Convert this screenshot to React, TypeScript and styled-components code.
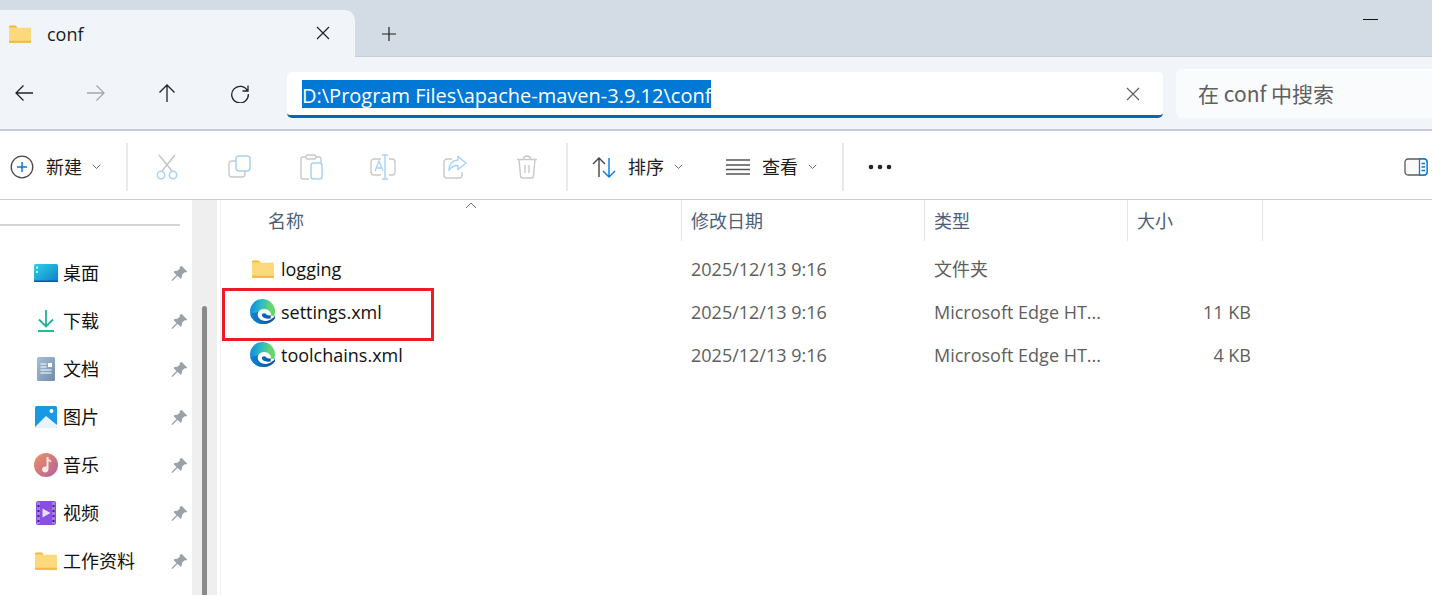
import styled, { createGlobalStyle } from "styled-components";
import { ReactNode } from "react";

const Global = createGlobalStyle`
  html, body { margin: 0; padding: 0; background: #fff; overflow: hidden; }
  body { font-family: "Noto Sans CJK SC", "Noto Sans", sans-serif; color: #1a1a1a; }
`;

const Page = styled.div`
  width: 1432px;
  height: 595px;
  overflow: hidden;
  display: flex;
  flex-direction: column;
`;

const TabStrip = styled.div`
  height: 57px;
  box-sizing: border-box;
  padding-top: 10px;
  background: #d3dbe5;
  border-bottom: 1px solid #c5cdd6;
  display: flex;
  align-items: stretch;
`;

const Tab = styled.div`
  width: 355px;
  height: 47px;
  background: #f1f4f8;
  border-radius: 0 10px 0 0;
  display: flex;
  align-items: center;
  padding: 0 25px 0 9px;
  box-sizing: border-box;
`;

const TabTitle = styled.span`
  flex: 1;
  margin-left: 16px;
  font-family: "Open Sans", sans-serif;
  font-size: 18px;
  color: #1c1c1c;
`;

const TabClose = styled.div`
  display: flex;
  margin-top: -1px;
`;

const NewTab = styled.div`
  margin-left: 26px;
  width: 18px;
  display: flex;
  align-items: center;
  height: 47px;
`;

const Minimize = styled.div`
  margin-left: auto;
  margin-right: 54px;
  margin-top: 9px;
  width: 15px;
  height: 1px;
  background: #111;
`;

const NavBar = styled.div`
  height: 74px;
  box-sizing: border-box;
  background: #f1f4f8;
  border-bottom: 2px solid #c3cad2;
  display: flex;
  align-items: center;
`;

const NavIcon = styled.div<{ $left: number }>`
  margin-left: ${(p) => p.$left}px;
  width: 20px;
  height: 20px;
  display: flex;
`;

const AddressBox = styled.div`
  margin-left: 37px;
  margin-top: 4px;
  width: 876px;
  height: 46px;
  box-sizing: border-box;
  background: #fff;
  border-bottom: 3px solid #0067c0;
  border-radius: 5px;
  display: flex;
  align-items: center;
  padding: 0 23px 0 15px;
`;

const Selected = styled.span`
  display: inline-block;
  background: #0078d4;
  color: #fff;
  font-family: "Open Sans", sans-serif;
  font-size: 20px;
  line-height: 32px;
  height: 28px;
  white-space: nowrap;
`;

const ClearIcon = styled.div`
  margin-left: auto;
  display: flex;
`;

const SearchBox = styled.div`
  margin-left: 13px;
  margin-top: 1px;
  flex: 1;
  height: 49px;
  box-sizing: border-box;
  background: #fafbfd;
  border-radius: 6px 0 0 6px;
  display: flex;
  align-items: center;
  padding: 0 0 2px 22px;
  font-size: 21px;
  color: #5f5f5f;
  white-space: pre;
`;

const Toolbar = styled.div`
  height: 69px;
  box-sizing: border-box;
  border-bottom: 1px solid #c9ced3;
  background: #fff;
  display: flex;
  align-items: center;
  padding: 4px 0 0 10px;
  font-size: 18px;
`;

const Divider = styled.div<{ $left: number }>`
  width: 2px;
  height: 48px;
  background: #e9e9e9;
  margin-left: ${(p) => p.$left}px;
`;

const ToolLabel = styled.span<{ $gap: number }>`
  margin-left: ${(p) => p.$gap}px;
  padding-bottom: 2px;
  color: #1c1c1c;
  font-size: 18px;
  line-height: 24px;
`;

const Slot = styled.div<{ $width: number; $gap?: number }>`
  width: ${(p) => p.$width}px;
  margin-left: ${(p) => p.$gap ?? 0}px;
  display: flex;
  justify-content: center;
  align-items: center;
  flex: none;
`;

const Chevron = styled.div<{ $gap: number }>`
  margin-left: ${(p) => p.$gap}px;
  display: flex;
`;

const PaneToggle = styled.div`
  margin-left: auto;
  margin-right: 4px;
  display: flex;
`;

const Body = styled.div`
  flex: 1;
  display: flex;
  min-height: 0;
`;

const Side = styled.div`
  width: 192px;
  flex: none;
  box-sizing: border-box;
  padding-top: 24px;
`;

const SideRule = styled.div`
  width: 180px;
  height: 2px;
  background: #d2d4d6;
  margin-bottom: 23px;
`;

const SideRow = styled.div`
  height: 48px;
  display: flex;
  align-items: center;
  box-sizing: border-box;
  padding-left: 33px;
`;

const SideIcon = styled.div`
  width: 26px;
  height: 26px;
  display: flex;
  align-items: center;
  justify-content: center;
  flex: none;
`;

const SideText = styled.span`
  margin-left: 4px;
  padding-bottom: 2px;
  font-size: 18px;
  color: #111;
  flex: 1;
  line-height: 24px;
`;

const Pin = styled.div`
  margin-right: 4px;
  display: flex;
`;

const Track = styled.div`
  width: 25px;
  flex: none;
  background: #efefef;
  box-sizing: border-box;
  padding: 106px 0 0 10px;
`;

const Thumb = styled.div`
  width: 5px;
  height: 300px;
  background: #8b8b8b;
  border-radius: 3px 3px 0 0;
`;

const Main = styled.div`
  flex: 1;
  min-width: 0;
  position: relative;

  &::before {
    content: "";
    position: absolute;
    left: 3px;
    top: 0;
    bottom: 0;
    width: 1px;
    background: #f3f3f3;
  }
`;

const HeaderRow = styled.div`
  height: 42px;
  display: grid;
  grid-template-columns: 465px 243px 203px 135px;
  font-size: 18px;
  color: #4c607a;
`;

const HeaderCell = styled.div<{ $pad: number }>`
  border-right: 1px solid #e5e5e5;
  padding-left: ${(p) => p.$pad}px;
  box-sizing: border-box;
  height: 41px;
  line-height: 40px;
`;

const SortCaret = styled.div`
  position: absolute;
  left: 248px;
  top: 2px;
  display: flex;
`;

const FileList = styled.div`
  padding-top: 5px;
`;

const FileRow = styled.div`
  height: 43px;
  display: grid;
  grid-template-columns: 465px 243px 203px 123px;
  align-items: center;
  font-family: "Open Sans", sans-serif;
  font-size: 18px;
  color: #5e5e5e;
`;

const NameCell = styled.div`
  display: flex;
  align-items: center;
  padding-left: 33px;
  color: #111;
`;

const NameIcon = styled.div`
  width: 25px;
  height: 25px;
  display: flex;
  align-items: center;
  justify-content: center;
  flex: none;
`;

const NameText = styled.span`
  margin-left: 6px;
`;

const DateCell = styled.div`
  padding-left: 9px;
`;

const TypeCell = styled.div`
  padding-left: 9px;
  white-space: nowrap;
`;

const CjkCell = styled(TypeCell)`
  padding-bottom: 2px;
  font-family: "Noto Sans CJK SC", sans-serif;
`;

const SizeCell = styled.div`
  text-align: right;
`;

const Highlight = styled.div`
  position: absolute;
  left: 5px;
  top: 88px;
  width: 212px;
  height: 53px;
  box-sizing: border-box;
  border: 3px solid #ed1c24;
`;

const Svg = ({ w, h, children }: { w: number; h: number; children: ReactNode }) => (
  <svg width={w} height={h} viewBox={`0 0 ${w} ${h}`} fill="none">
    {children}
  </svg>
);

const FolderIcon = () => (
  <svg width="22" height="18" viewBox="0 0 22 18">
    <path d="M0 2.200C0 1 .6.4 1.600.4h5l2.400 2.400H0z" fill="#f7b731" />
    <rect x="0" y="2.800" width="22" height="15" rx="0.800" fill="#fcd97b" />
    <rect x="0" y="15.800" width="22" height="2" fill="#f1b93f" />
  </svg>
);

const EdgeIcon = () => (
  <svg width="25" height="25" viewBox="0 0 25 25">
    <defs>
      <linearGradient id="edgeTop" x1="0" y1="0.3" x2="1" y2="0.5">
        <stop offset="0" stopColor="#1289dc" />
        <stop offset="0.42" stopColor="#2dbac6" />
        <stop offset="0.78" stopColor="#66d56e" />
      </linearGradient>
      <linearGradient id="edgeLow" x1="0" y1="0" x2="1" y2="0">
        <stop offset="0" stopColor="#1184d8" />
        <stop offset="1" stopColor="#0c4f96" />
      </linearGradient>
    </defs>
    <circle cx="12.500" cy="12.500" r="12.500" fill="url(#edgeTop)" />
    <path d="M6 14c2-2 7-2.500 10-1 1.800 1 2.500 2.300 1.800 3.500H25v3c-2.500 3.500-6.500 5.500-11 5.500C7 25 2 21 .3 15.500c1.500-1.500 3.700-2 5.700-1.500z" fill="url(#edgeLow)" />
    <path d="M21 16.500c.4-3.600-2.900-6.500-7-6.500-4 0-6.800 3-6.200 6.500.6 3.400 4.300 5.800 8.500 5.400 2.600-.3 5-1.400 6.500-3.200-2 .8-4.500 1.200-6.500.9-2.700-.4-4.500-1.800-4.500-3.600 0-1 .9-1.700 2.200-1.700 1.500 0 2.500.7 2.700 1.700z" fill="#fff" />
    <path d="M21 16.500H24.800c-.3 1-.8 1.800-1.800 2.400-1 .2-1.700.2-2.500 0z" fill="#fff" />
  </svg>
);

const PinIcon = () => (
  <svg width="17" height="17" viewBox="0 0 17 17">
    <path d="M10.500.8l5.700 5.600-1.300 1.100-1.300-.2-2.700 2.700c.3 1.500 0 2.800-1 3.700L6.300 10.900 1.700 15.700.6 15.900l.2-1.200 4.700-4.600-3-3.200c1-1 2.300-1.300 3.800-1l2.700-2.700-.2-1.300z" fill="#98a2a8" />
  </svg>
);

const Chev = () => (
  <Svg w={9} h={6}>
    <path d="M.8.8l3.700 3.700L8.200.8" stroke="#666" strokeWidth="1" />
  </Svg>
);

const files = [
  { name: "logging", type: "文件夹", size: "", kind: "folder" },
  { name: "settings.xml", type: "Microsoft Edge HT...", size: "11 KB", kind: "edge" },
  { name: "toolchains.xml", type: "Microsoft Edge HT...", size: "4 KB", kind: "edge" },
];

const places = [
  {
    label: "桌面",
    icon: (
      <svg width="24" height="18" viewBox="0 0 24 18">
        <defs>
          <linearGradient id="desk" x1="0" y1="0" x2="1" y2="1">
            <stop offset="0" stopColor="#2fd4e2" />
            <stop offset="1" stopColor="#0c7dcb" />
          </linearGradient>
        </defs>
        <rect width="24" height="18" rx="1.500" fill="url(#desk)" />
        <rect y="16.500" width="24" height="1.500" fill="#0a5aa0" />
        <rect x="2" y="2.500" width="2" height="2" fill="#d8f6fb" />
        <rect x="2" y="7" width="2" height="2" fill="#d8f6fb" />
      </svg>
    ),
  },
  {
    label: "下载",
    icon: (
      <svg width="18" height="24" viewBox="0 0 18 24">
        <path d="M9 1v16M2 10.500l7 7 7-7" stroke="#1fb29a" strokeWidth="1.800" fill="none" />
        <rect x="1" y="21" width="16" height="2" fill="#22bd96" />
      </svg>
    ),
  },
  {
    label: "文档",
    icon: (
      <svg width="18" height="24" viewBox="0 0 18 24">
        <defs>
          <linearGradient id="doc" x1="0" y1="0" x2="1" y2="1">
            <stop offset="0" stopColor="#a9bfd8" />
            <stop offset="1" stopColor="#6f8caa" />
          </linearGradient>
        </defs>
        <rect width="18" height="24" rx="1.500" fill="url(#doc)" />
        <path d="M3.500 7h6M3.500 10h6M3.500 13h11M3.500 16h11" stroke="#fff" strokeWidth="1" />
        <rect x="11" y="6" width="4" height="4" fill="#fff" />
      </svg>
    ),
  },
  {
    label: "图片",
    icon: (
      <svg width="22" height="22" viewBox="0 0 22 22">
        <rect width="22" height="22" rx="1.500" fill="#1a98e2" />
        <path d="M0 21l11-11 11 9v1.500c0 .8-.5 1.500-1.500 1.500h-19C.5 22 0 21.500 0 21z" fill="#e8f3fb" />
        <circle cx="16.500" cy="5" r="2" fill="#fff" />
      </svg>
    ),
  },
  {
    label: "音乐",
    icon: (
      <svg width="24" height="24" viewBox="0 0 24 24">
        <defs>
          <linearGradient id="music" x1="0" y1="0" x2="1" y2="1">
            <stop offset="0" stopColor="#ee9360" />
            <stop offset="1" stopColor="#b0609f" />
          </linearGradient>
        </defs>
        <circle cx="12" cy="12" r="12" fill="url(#music)" />
        <path d="M12.500 4h2v2.200c1.300.3 2.500 1 3 2.300l-1 .8c-.5-.6-1.200-1-2-1.100v7.800c0 2-1.500 3.400-3.300 3.400S8 18 8 16.400s1.400-3 3-3c.5 0 1 .1 1.500.3z" fill="#fde9e4" />
      </svg>
    ),
  },
  {
    label: "视频",
    icon: (
      <svg width="20" height="24" viewBox="0 0 20 24">
        <rect width="20" height="24" rx="2" fill="#8a4ee0" />
        <path d="M1 1h3v22H1zM16 1h3v22h-3z" fill="#a778ee" />
        <path d="M1.500 4h2v2h-2zM1.500 9h2v2h-2zM1.500 14h2v2h-2zM1.500 19h2v2h-2zM16.500 4h2v2h-2zM16.500 9h2v2h-2zM16.500 14h2v2h-2zM16.500 19h2v2h-2z" fill="#3c2573" />
        <path d="M6.500 7.500l8 4.500-8 4.500z" fill="#e9ddfb" />
      </svg>
    ),
  },
  { label: "工作资料", icon: <FolderIcon /> },
];

export default function App() {
  return (
    <Page>
      <Global />
      <TabStrip>
        <Tab>
          <FolderIcon />
          <TabTitle>conf</TabTitle>
          <TabClose>
            <Svg w={14} h={14}>
              <path d="M1 1l12 12M13 1L1 13" stroke="#222" strokeWidth="1.200" />
            </Svg>
          </TabClose>
        </Tab>
        <NewTab>
          <Svg w={16} h={16}>
            <path d="M8 1v14M1 8h14" stroke="#222" strokeWidth="1.200" />
          </Svg>
        </NewTab>
        <Minimize />
      </TabStrip>
      <NavBar>
        <NavIcon $left={14}>
          <Svg w={20} h={20}>
            <path d="M19 10H2M9.500 2.500L2 10l7.500 7.500" stroke="#222" strokeWidth="1.300" />
          </Svg>
        </NavIcon>
        <NavIcon $left={52}>
          <Svg w={20} h={20}>
            <path d="M1 10h17M10.500 2.500L18 10l-7.500 7.500" stroke="#a5a8ab" strokeWidth="1.300" />
          </Svg>
        </NavIcon>
        <NavIcon $left={51}>
          <Svg w={20} h={20}>
            <path d="M10 19V2M2.500 9.500L10 2l7.500 7.500" stroke="#222" strokeWidth="1.300" />
          </Svg>
        </NavIcon>
        <NavIcon $left={53}>
          <Svg w={20} h={20}>
            <path d="M17.500 8A8.300 8.300 0 1 0 18.300 11M18 2.500V8h-5.500" stroke="#222" strokeWidth="1.300" />
          </Svg>
        </NavIcon>
        <AddressBox>
          <Selected>D:\Program Files\apache-maven-3.9.12\conf</Selected>
          <ClearIcon>
            <Svg w={14} h={14}>
              <path d="M1 1l12 12M13 1L1 13" stroke="#5c5c5c" strokeWidth="1.100" />
            </Svg>
          </ClearIcon>
        </AddressBox>
        <SearchBox>在 conf 中搜索</SearchBox>
      </NavBar>
      <Toolbar>
        <Svg w={24} h={24}>
          <circle cx="12" cy="12" r="10.800" stroke="#4a4a4a" strokeWidth="1.300" />
          <path d="M12 7v10M7 12h10" stroke="#0a78d6" strokeWidth="1.500" />
        </Svg>
        <ToolLabel $gap={12}>新建</ToolLabel>
        <Chevron $gap={10}>
          <Chev />
        </Chevron>
        <Divider $left={25} />
        <Slot $width={78}>
          <Svg w={24} h={26}>
            <path d="M4 1l13 16M20 1L7 17" stroke="#c4c4c4" strokeWidth="1.400" />
            <circle cx="6" cy="21" r="3.700" stroke="#a8d2f5" strokeWidth="1.500" />
            <circle cx="18" cy="21" r="3.700" stroke="#a8d2f5" strokeWidth="1.500" />
          </Svg>
        </Slot>
        <Slot $width={67}>
          <Svg w={24} h={24}>
            <rect x="1" y="6" width="16" height="16" rx="3" stroke="#c9c9c9" strokeWidth="1.400" />
            <rect x="8" y="1" width="14" height="15" rx="3" fill="#fff" stroke="#a8d2f5" strokeWidth="1.500" />
          </Svg>
        </Slot>
        <Slot $width={77}>
          <Svg w={24} h={26}>
            <path d="M6 3H3a2 2 0 0 0-2 2v18a2 2 0 0 0 2 2h6M16 3h3a2 2 0 0 1 2 2v4" stroke="#c9c9c9" strokeWidth="1.400" />
            <rect x="6" y="1" width="10" height="4" rx="1.500" stroke="#c9c9c9" strokeWidth="1.400" />
            <rect x="11" y="9" width="11" height="16" rx="2.500" stroke="#a8d2f5" strokeWidth="1.500" />
          </Svg>
        </Slot>
        <Slot $width={66}>
          <Svg w={26} h={26}>
            <path d="M11 5H4a3 3 0 0 0-3 3v10a3 3 0 0 0 3 3h7M19 5h3a3 3 0 0 1 3 3v10a3 3 0 0 1-3 3h-3" stroke="#c9c9c9" strokeWidth="1.400" />
            <path d="M15 1v24M12 1h6M12 25h6" stroke="#a8d2f5" strokeWidth="1.400" />
            <path d="M5 17l4-10 4 10M6.500 14h5" stroke="#a8d2f5" strokeWidth="1.300" />
          </Svg>
        </Slot>
        <Slot $width={78}>
          <Svg w={24} h={24}>
            <path d="M9 4H4a3 3 0 0 0-3 3v13a3 3 0 0 0 3 3h12a3 3 0 0 0 3-3v-3" stroke="#c9c9c9" strokeWidth="1.400" />
            <path d="M15 1.500l8 6.500-8 6.500v-4c-4 0-7 1.500-9 5 0-6 3-10 9-10.500z" stroke="#a8d2f5" strokeWidth="1.400" strokeLinejoin="round" />
          </Svg>
        </Slot>
        <Slot $width={66}>
          <Svg w={22} h={24}>
            <path d="M1 4.500h20M3 4.500l1.500 16a2.500 2.500 0 0 0 2.500 2.500h8a2.500 2.500 0 0 0 2.500-2.500L19 4.500M7.500 4.500C7.500 2 9 1 11 1s3.500 1 3.500 3.500M9 10v8M13 10v8" stroke="#c9c9c9" strokeWidth="1.400" />
          </Svg>
        </Slot>
        <Divider $left={6} />
        <Slot $width={24} $gap={24}>
          <Svg w={24} h={22}>
            <path d="M7 21V2M1 8l6-6 6 6" stroke="#444" strokeWidth="1.400" />
            <path d="M17 2v19M11 15l6 6 6-6" stroke="#0a78d6" strokeWidth="1.400" />
          </Svg>
        </Slot>
        <ToolLabel $gap={12}>排序</ToolLabel>
        <Chevron $gap={10}>
          <Chev />
        </Chevron>
        <Slot $width={24} $gap={43}>
          <Svg w={24} h={16}>
            <path d="M0 1h24M0 6h24M0 10.500h24M0 15h24" stroke="#555" strokeWidth="1.300" />
          </Svg>
        </Slot>
        <ToolLabel $gap={12}>查看</ToolLabel>
        <Chevron $gap={10}>
          <Chev />
        </Chevron>
        <Divider $left={25} />
        <Slot $width={24} $gap={24}>
          <Svg w={24} h={6}>
            <circle cx="3" cy="3" r="2.300" fill="#222" />
            <circle cx="12" cy="3" r="2.300" fill="#222" />
            <circle cx="21" cy="3" r="2.300" fill="#222" />
          </Svg>
        </Slot>
        <PaneToggle>
          <Svg w={24} h={18}>
            <rect x="1" y="1" width="22" height="16" rx="3" fill="#fafafa" stroke="#5c5c5c" strokeWidth="1.300" />
            <path d="M15.500 1H20a3 3 0 0 1 3 3v10a3 3 0 0 1-3 3h-4.500z" fill="#fff" stroke="#0a78d6" strokeWidth="1.300" />
            <path d="M17.500 5.500h3.500M17.500 9h3.500M17.500 12.500h3.500" stroke="#0a78d6" strokeWidth="1.300" />
          </Svg>
        </PaneToggle>
      </Toolbar>
      <Body>
        <Side>
          <SideRule />
          {places.map((p) => (
            <SideRow key={p.label}>
              <SideIcon>{p.icon}</SideIcon>
              <SideText>{p.label}</SideText>
              <Pin>
                <PinIcon />
              </Pin>
            </SideRow>
          ))}
        </Side>
        <Track>
          <Thumb />
        </Track>
        <Main>
          <SortCaret>
            <Svg w={12} h={7}>
              <path d="M1 6l5-5 5 5" stroke="#6e6e6e" strokeWidth="1" />
            </Svg>
          </SortCaret>
          <HeaderRow>
            <HeaderCell $pad={51}>名称</HeaderCell>
            <HeaderCell $pad={9}>修改日期</HeaderCell>
            <HeaderCell $pad={9}>类型</HeaderCell>
            <HeaderCell $pad={9}>大小</HeaderCell>
          </HeaderRow>
          <FileList>
            {files.map((f) => (
              <FileRow key={f.name}>
                <NameCell>
                  <NameIcon>{f.kind === "folder" ? <FolderIcon /> : <EdgeIcon />}</NameIcon>
                  <NameText>{f.name}</NameText>
                </NameCell>
                <DateCell>2025/12/13 9:16</DateCell>
                {f.kind === "folder" ? <CjkCell>{f.type}</CjkCell> : <TypeCell>{f.type}</TypeCell>}
                <SizeCell>{f.size}</SizeCell>
              </FileRow>
            ))}
          </FileList>
          <Highlight />
        </Main>
      </Body>
    </Page>
  );
}
